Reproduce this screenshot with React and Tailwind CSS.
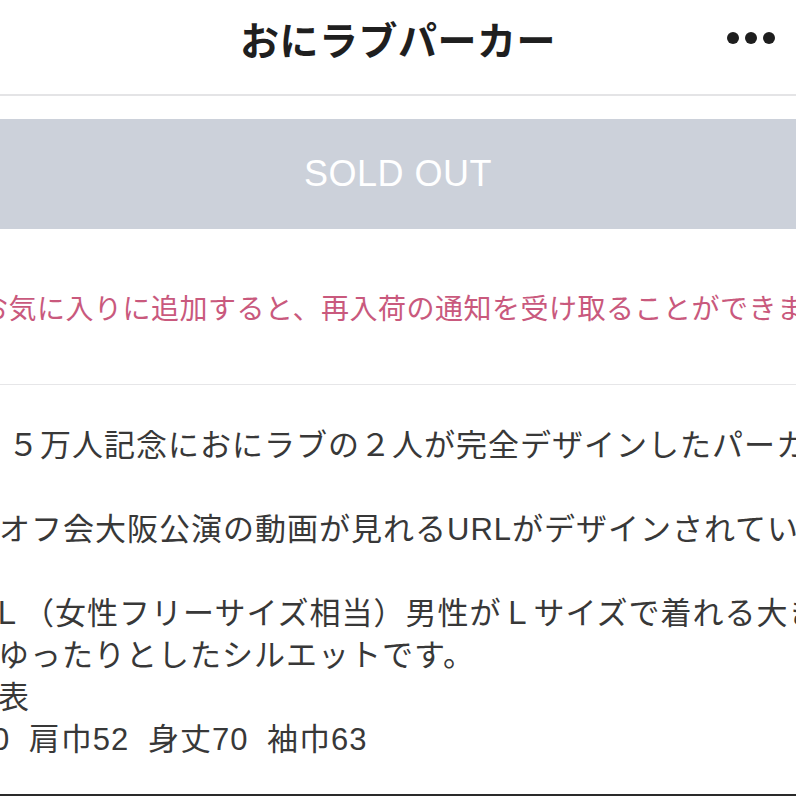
const jp = { fontFamily: '"Noto Sans CJK JP", "Noto Sans", sans-serif' };
const body = { fontFamily: '"Liberation Sans", "Noto Sans CJK JP", sans-serif' };

const bodyLines = [
  { text: "５万人記念におにラブの２人が完全デザインしたパーカー", cls: "ml-[8px]" },
  { text: "", cls: "" },
  { text: "オフ会大阪公演の動画が見れるURLがデザインされています。", cls: "-ml-[1px]" },
  { text: "", cls: "" },
  { text: "Ｌ（女性フリーサイズ相当）男性がＬサイズで着れる大きさの", cls: "-ml-[9px]" },
  { text: "ゆったりとしたシルエットです。", cls: "-ml-[2px]" },
  { text: "表", cls: "-ml-[2px]" },
  { text: "0 肩巾52 身丈70 袖巾63", cls: "-ml-[8px] [word-spacing:9px]" },
];

export default function App() {
  return (
    <div className="w-[796px] h-[796px] overflow-hidden bg-white flex flex-col" style={jp}>
      <header className="h-[96px] shrink-0 flex items-center justify-between border-b-2 border-[#e4e4e6] pb-[18px]">
        <div className="w-[100px]" />
        <h1 className="text-[39px] font-bold text-[#1f1f1f] tracking-[0.5px] leading-none">
          おにラブパーカー
        </h1>
        <div className="w-[100px] flex items-center justify-end gap-[6px] pr-[21px]">
          <span className="w-[12px] h-[12px] rounded-full bg-[#1e1e1e]" />
          <span className="w-[12px] h-[12px] rounded-full bg-[#1e1e1e]" />
          <span className="w-[12px] h-[12px] rounded-full bg-[#1e1e1e]" />
        </div>
      </header>

      <div className="pt-[23px] shrink-0">
        <div className="h-[110px] bg-[#ccd1da] flex items-center justify-center">
          <span
            className="text-white text-[36px] tracking-[0.5px] leading-none"
            style={{ fontFamily: '"Liberation Sans", Arial, sans-serif' }}
          >
            SOLD OUT
          </span>
        </div>
      </div>

      <div className="h-[156px] shrink-0 border-b border-[#e6e6e8] flex items-center overflow-hidden">
        <p className="whitespace-nowrap text-[28px] tracking-[0.5px] text-[#c9597d] -ml-[20px] leading-none">
          お気に入りに追加すると、再入荷の通知を受け取ることができます。
        </p>
      </div>

      <div className="flex-1 pt-[40px] overflow-hidden" style={body}>
        {bodyLines.map((line, i) => (
          <div
            key={i}
            className={`h-[42px] leading-[42px] whitespace-nowrap text-[31px] tracking-[1px] text-[#383838] ${line.cls}`}
          >
            {line.text}
          </div>
        ))}
      </div>
      <div className="h-[2px] shrink-0 bg-[#2a2a2a]" />
    </div>
  );
}
